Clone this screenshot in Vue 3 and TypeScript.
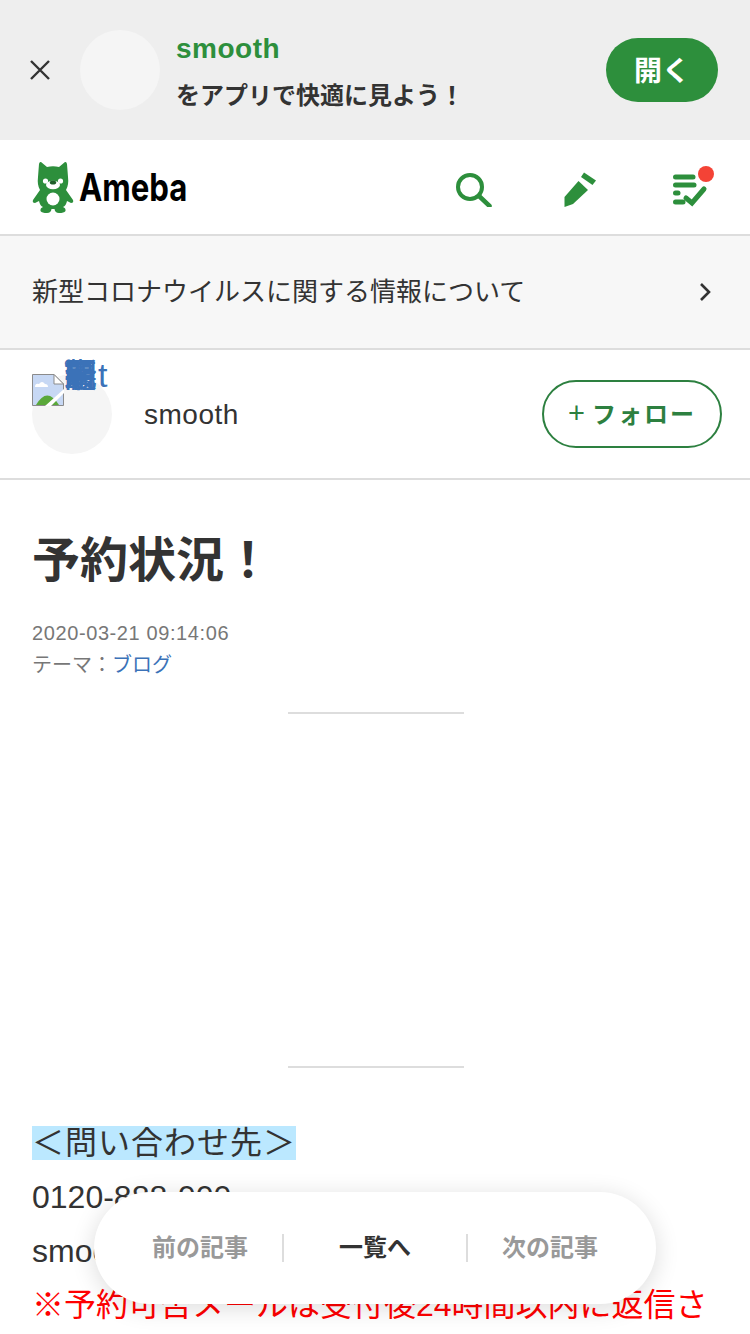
<template>
  <div class="page">
    <div class="app-banner">
      <svg class="close" viewBox="0 0 20 20" width="20" height="20" aria-label="閉じる">
        <path d="M1 1 L19 19 M19 1 L1 19" stroke="#333" stroke-width="2.4" fill="none" />
      </svg>
      <div class="banner-avatar"></div>
      <div class="banner-text">
        <p class="banner-name">{{ blogName }}</p>
        <p class="banner-copy">をアプリで快適に見よう！</p>
      </div>
      <button class="open-btn">開く</button>
    </div>

    <header class="site-header">
      <div class="logo">
        <svg viewBox="0 0 42 52" width="42" height="52">
          <path
            fill="#2d8f3c"
            d="M9 1 L15 6 Q21 4.500 27 6 L33 1 Q34.500 .5 35 3 L36 16 Q37 24 34 29 L41 39 Q42 42 39 42 L35 40 Q34 45 31 46 Q34 47 33.500 50 Q32 52 27 52 Q23 52 22.500 48 L19.500 48 Q19 52 15 52 Q10 52 8.500 50 Q8 47 11 46 Q8 45 7 40 L3 42 Q0 42 1 39 L8 29 Q5 24 6 16 L7 3 Q7.500 .5 9 1 Z"
          />
          <circle cx="13.500" cy="20" r="2.600" fill="#fff" />
          <circle cx="28.500" cy="20" r="2.600" fill="#fff" />
          <ellipse cx="21" cy="24" rx="7" ry="4.200" fill="#fff" />
          <ellipse cx="21" cy="21.500" rx="3.200" ry="2" fill="#1f5f2a" />
          <circle cx="21" cy="38" r="6.500" fill="#fff" />
        </svg>
        <span class="logo-text">Ameba</span>
      </div>
      <nav class="header-icons">
        <svg viewBox="0 0 40 40" width="40" height="40">
          <circle cx="16" cy="20" r="12" fill="none" stroke="#2d8f3c" stroke-width="4" />
          <path d="M25 29 L35.500 39" stroke="#2d8f3c" stroke-width="4.500" stroke-linecap="round" />
        </svg>
        <svg viewBox="0 0 40 40" width="40" height="40">
          <path fill="#2d8f3c" d="M3.500 40 V30 L17.500 14 L27 23 L12 37 Z" />
          <path fill="#2d8f3c" d="M23 5.500 L35 13.500 L31.500 18 L20 10 Z" />
        </svg>
        <div class="check-icon">
          <svg viewBox="0 0 40 36" width="40" height="36">
            <g stroke="#2d8f3c" stroke-width="5" stroke-linecap="round" fill="none">
              <path d="M7.500 5 H25" />
              <path d="M7.500 13 H26" />
              <path d="M7.500 21 H10" />
              <path d="M7.500 30 H15" />
            </g>
            <path d="M18 26 L24 31 L36 17" stroke="#2d8f3c" stroke-width="5" fill="none" stroke-linecap="round" />
          </svg>
          <span class="dot"></span>
        </div>
      </nav>
    </header>

    <a class="notice">
      <span class="notice-text">新型コロナウイルスに関する情報について</span>
      <svg viewBox="0 0 14 22" width="14" height="22">
        <path d="M3 3 L11 11 L3 19" fill="none" stroke="#333" stroke-width="2.600" />
      </svg>
    </a>

    <section class="profile">
      <div class="profile-avatar">
        <svg class="broken-img" viewBox="0 0 32 32" width="32" height="32">
          <path d="M.500 .500 H22 L31.500 10 V31.500 H.500 Z" fill="#c7d8f4" stroke="#8b8b8b" />
          <path d="M22 .500 V10 H31.500 Z" fill="#fff" stroke="#8b8b8b" />
          <path d="M3 13 Q3 9 7 10 Q10 6 13 10 Q16 10 16 13 Z" fill="#fff" />
          <path d="M4 31 Q15 12 27 31 Z" fill="#5aa83a" />
          <path d="M13 32 L32 15 V19 L19 32 Z" fill="#fff" />
        </svg>
        <span class="alt-text"><span class="alt-stack">最新記事閣゜</span><span class="alt-tail">t</span></span>
      </div>
      <span class="profile-name">{{ blogName }}</span>
      <button class="follow-btn"><span class="plus">+</span>フォロー</button>
    </section>

    <article class="entry">
      <h1 class="entry-title">予約状況！</h1>
      <p class="entry-date">2020-03-21 09:14:06</p>
      <p class="entry-theme">テーマ：<a>ブログ</a></p>
      <hr class="rule" />
      <div class="entry-gap"></div>
      <hr class="rule" />
      <div class="entry-body">
        <p><span class="mark">＜問い合わせ先＞</span></p>
        <p>0120-888-900</p>
        <p>smooth@example.jp</p>
        <p class="red">※予約可否メールは受付後24時間以内に返信さ</p>
      </div>
    </article>

    <nav class="pager">
      <a v-for="item in pagerItems" :key="item.label" :class="{ current: item.current }">{{ item.label }}</a>
    </nav>
  </div>
</template>

<script setup lang="ts">
type PagerItem = {
  label: string
  current?: boolean
}

const blogName = 'smooth'

const pagerItems: PagerItem[] = [
  { label: '前の記事' },
  { label: '一覧へ', current: true },
  { label: '次の記事' },
]
</script>

<style>
html,
body {
  margin: 0;
  background: #fff;
}
</style>

<style scoped>
.page {
  position: relative;
  width: 750px;
  height: 1334px;
  overflow: hidden;
  color: #333;
  font-family: "Liberation Sans", "Noto Sans CJK JP", sans-serif;
}

p {
  margin: 0;
}

.app-banner {
  display: flex;
  align-items: center;
  height: 140px;
  padding: 0 32px 0 30px;
  box-sizing: border-box;
  background: #eee;
}

.close {
  flex: none;
}

.banner-avatar {
  flex: none;
  width: 80px;
  height: 80px;
  margin-left: 30px;
  border-radius: 50%;
  background: #f5f5f5;
}

.banner-text {
  flex: 1;
  margin-left: 16px;
  padding-top: 4px;
}

.banner-name {
  color: #2d8f3c;
  font-size: 28px;
  font-weight: 700;
  line-height: 38px;
  letter-spacing: 0.5px;
}

.banner-copy {
  margin-top: 9px;
  font-size: 24px;
  font-weight: 700;
  line-height: 38px;
}

.open-btn {
  flex: none;
  width: 112px;
  height: 64px;
  padding: 0 0 2px;
  border: 0;
  border-radius: 32px;
  background: #2d8f3c;
  color: #fff;
  font-family: inherit;
  font-size: 28px;
  font-weight: 700;
}

.site-header {
  display: flex;
  align-items: center;
  justify-content: space-between;
  height: 94px;
  padding: 0 42px 0 32px;
  border-bottom: 2px solid #ddd;
}

.logo {
  display: flex;
  align-items: center;
  gap: 5px;
}

.logo-text {
  color: #000;
  font-family: Inter, sans-serif;
  font-size: 38px;
  font-weight: 700;
  transform: scaleX(0.82);
  transform-origin: left center;
}

.header-icons {
  display: flex;
  align-items: center;
  gap: 67px;
}

.check-icon {
  position: relative;
  width: 40px;
  height: 36px;
  margin-top: 6px;
}

.dot {
  position: absolute;
  top: -6px;
  right: -6px;
  width: 16px;
  height: 16px;
  border-radius: 50%;
  background: #f44336;
}

.notice {
  display: flex;
  align-items: center;
  justify-content: space-between;
  height: 112px;
  padding: 0 38px 0 32px;
  border-bottom: 2px solid #ddd;
  background: #f7f7f7;
  font-size: 26px;
}

.notice-text {
  margin-bottom: 6px;
}

.profile {
  display: flex;
  align-items: center;
  height: 128px;
  padding: 0 28px 0 32px;
  border-bottom: 2px solid #ddd;
}

.profile-avatar {
  position: relative;
  flex: none;
  width: 80px;
  height: 80px;
  border-radius: 50%;
  background: #f5f5f5;
}

.broken-img {
  position: absolute;
  top: 0;
  left: 0;
}

.alt-text {
  position: absolute;
  top: -25px;
  left: 32px;
  color: #3b72b8;
  font-size: 33px;
  white-space: nowrap;
}

.alt-stack {
  letter-spacing: -33px;
}

.alt-tail {
  margin-left: 34px;
  font-size: 34px;
}

.profile-name {
  flex: 1;
  margin-top: 2px;
  margin-left: 32px;
  font-size: 28px;
  letter-spacing: 0.5px;
}

.follow-btn {
  flex: none;
  width: 180px;
  height: 68px;
  padding: 0 0 4px;
  border: 2px solid #2d8040;
  border-radius: 34px;
  background: #fff;
  color: #2d8040;
  font-family: inherit;
  font-size: 24px;
  font-weight: 700;
  letter-spacing: 2px;
}

.plus {
  margin-right: 5px;
  font-size: 29px;
  font-weight: 400;
}

.entry {
  padding: 0 32px;
}

.entry-title {
  margin: 47px 0 0;
  font-size: 48px;
  font-weight: 700;
  line-height: 68px;
}

.entry-date {
  margin-top: 22px;
  color: #777;
  font-size: 20px;
  line-height: 32px;
  letter-spacing: 0.6px;
}

.entry-theme {
  color: #777;
  font-size: 20px;
  line-height: 32px;
}

.entry-theme a {
  color: #3b72b8;
}

.rule {
  width: 176px;
  height: 2px;
  margin: 0 0 0 256px;
  border: 0;
  background: #ddd;
}

.entry-theme + .rule {
  margin-top: 31px;
}

.entry-gap {
  height: 352px;
}

.entry-body {
  margin-top: 48px;
  font-size: 32px;
  line-height: 54px;
  white-space: nowrap;
}

.mark {
  display: inline-block;
  margin-top: 10px;
  background: #bbe8ff;
  line-height: 34px;
  letter-spacing: 1px;
  vertical-align: top;
}

.red {
  color: #f00;
}

.pager {
  position: absolute;
  left: 94px;
  top: 1192px;
  display: grid;
  grid-template-columns: 164px 186px 164px;
  align-items: center;
  width: 562px;
  height: 112px;
  padding: 0 24px;
  box-sizing: border-box;
  border-radius: 56px;
  background: #fff;
  box-shadow: 0 4px 24px rgba(0, 0, 0, 0.14);
}

.pager a {
  color: #999;
  font-size: 24px;
  font-weight: 700;
  line-height: 28px;
  text-align: center;
}

.pager a.current {
  border-right: 2px solid #ddd;
  border-left: 2px solid #ddd;
  color: #333;
}
</style>
